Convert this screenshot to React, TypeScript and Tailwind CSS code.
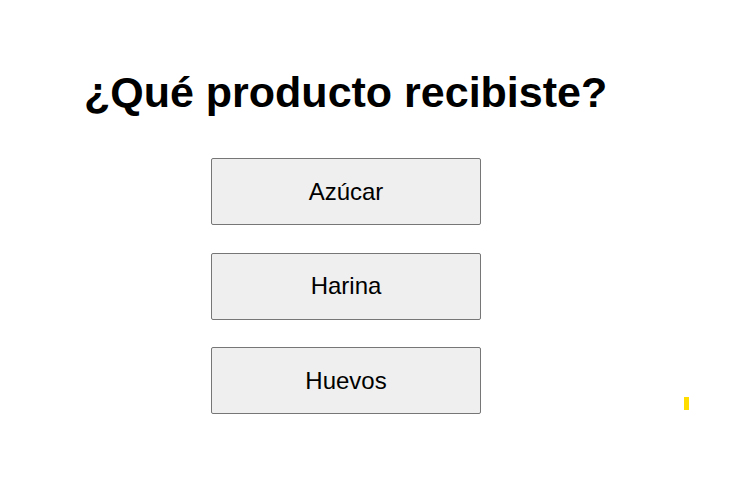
export default function App() {
  const options = ["Azúcar", "Harina", "Huevos"];
  return (
    <div
      className="relative w-[737px] h-[495px] bg-white text-black"
      style={{ fontFamily: '"Liberation Sans", Arial, sans-serif' }}
    >
      <div className="flex flex-col pl-[84px] pt-[66px]">
        <h1 className="text-[43px] leading-[52px] font-bold">¿Qué producto recibiste?</h1>
        <div className="flex flex-col gap-[27.5px] mt-[40px] ml-[127px]">
          {options.map((o) => (
            <button
              key={o}
              className="w-[270px] h-[67px] bg-[#efefef] border border-[#767676] rounded-[2px] text-[24px] text-black"
            >
              {o}
            </button>
          ))}
        </div>
      </div>
      <div className="absolute left-[684px] top-[397px] w-[5px] h-[13px] bg-[#ffdd00]" />
    </div>
  );
}
